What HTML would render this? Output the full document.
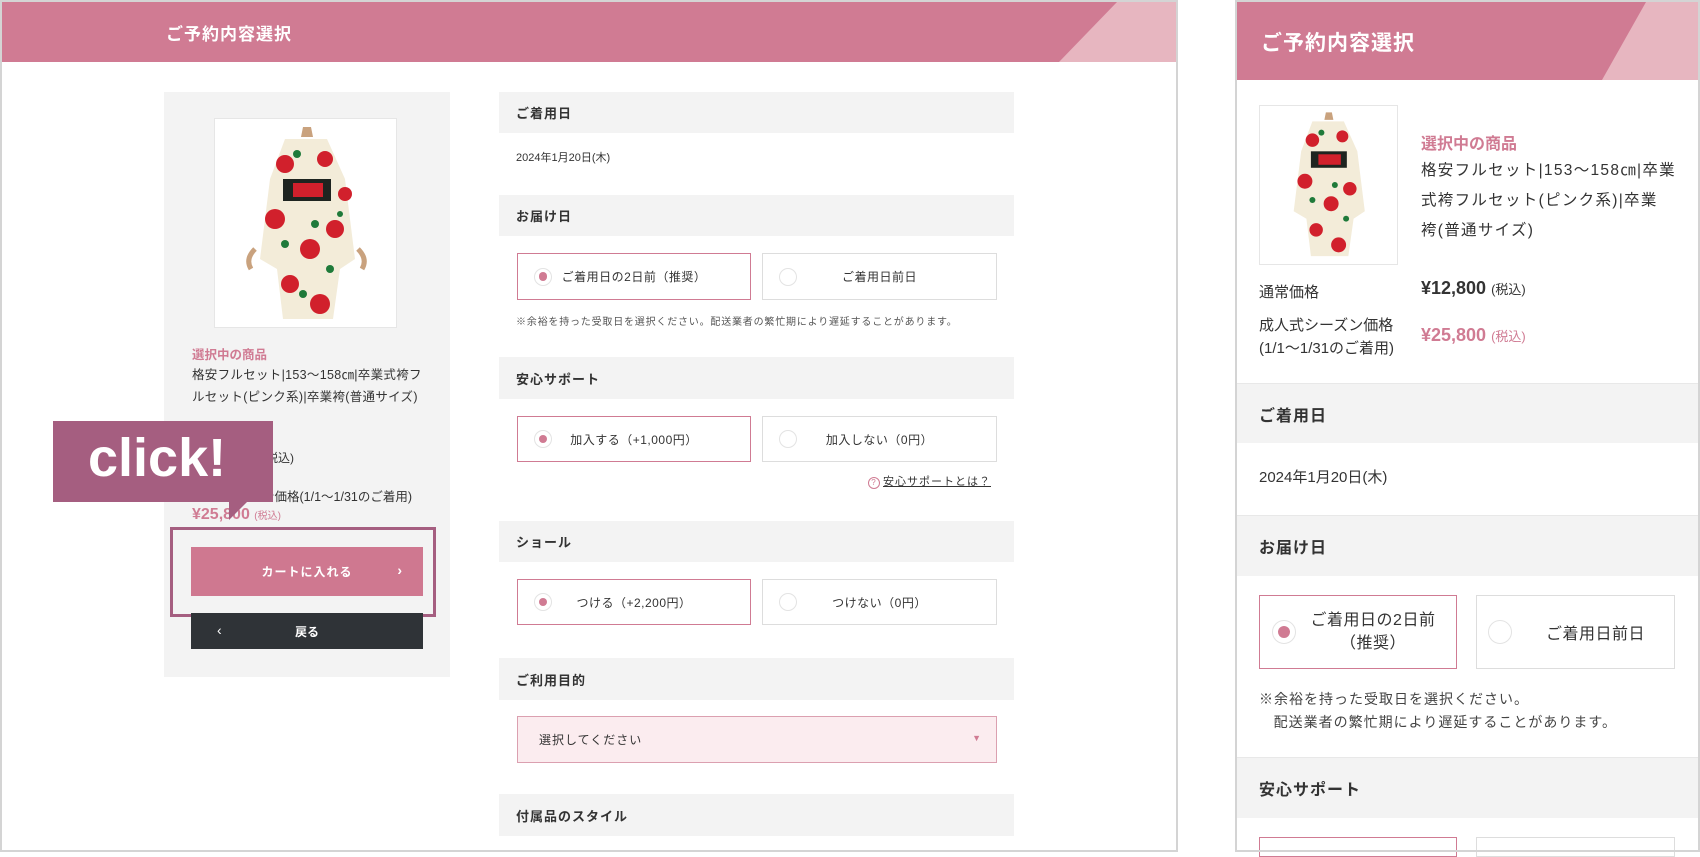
<!DOCTYPE html>
<html><head><meta charset="utf-8"><style>
*{margin:0;padding:0;box-sizing:border-box}
body{width:1700px;height:852px;background:#fff;position:relative;overflow:hidden;font-family:"Liberation Sans","Noto Sans CJK JP",sans-serif;color:#333}
.a{position:absolute}
.frame{border:2px solid #d4d4d4;}
.hd{background:#f3f3f3;font-weight:bold;font-size:13px;color:#333;display:flex;align-items:center;padding-left:17px;letter-spacing:1px}
.opt{border:1px solid #ddd;background:#fff;font-size:12px;display:flex;align-items:center;justify-content:center;letter-spacing:.5px}
.opt.on{border-color:#d07b93}
.rd{position:absolute;left:16px;top:50%;width:18px;height:18px;margin-top:-9px;border-radius:50%;border:1px solid #e3e3e3;background:#fff;display:flex;align-items:center;justify-content:center}
.on .rd::after{content:"";width:56%;height:56%;border-radius:50%;background:#d07b93}
.rhd{background:#f3f3f3;font-weight:bold;font-size:16px;display:flex;align-items:center;padding-left:22px;letter-spacing:1px;border-top:1px solid #e8e8e8}
</style></head><body>

<div class="a frame" style="left:0;top:0;width:1178px;height:852px"></div>
<div class="a" style="left:2px;top:2px;width:1174px;height:60px;background:#d07b93;overflow:hidden">
 <div class="a" style="left:0;top:0;width:1174px;height:60px;background:#e7b6c0;clip-path:polygon(1115px 0,1174px 0,1174px 60px,1057px 60px)"></div>
 <div class="a" style="left:164px;top:18px;color:#fff;font-size:17px;font-weight:bold;letter-spacing:1px">ご予約内容選択</div>
</div>

<div class="a" style="left:164px;top:92px;width:286px;height:585px;background:#f3f3f3"></div>
<div class="a" style="left:214px;top:118px;width:183px;height:210px;background:#fff;border:1px solid #e6e6e6">
 <svg width="183" height="210" viewBox="0 0 183 210">
  <path d="M88 8 L96 8 L98 18 L86 18Z" fill="#c9a27e"/>
  <path d="M70 20 L112 20 L130 60 L140 140 L125 150 L118 200 L68 200 L62 150 L45 140 L55 60Z" fill="#f3ecd9"/>
  <rect x="68" y="60" width="48" height="22" fill="#1e2420"/>
  <rect x="78" y="64" width="30" height="14" fill="#d1202c"/>
  <g fill="#d1202c"><circle cx="70" cy="45" r="9"/><circle cx="110" cy="40" r="8"/><circle cx="60" cy="100" r="10"/><circle cx="120" cy="110" r="9"/><circle cx="95" cy="130" r="10"/><circle cx="75" cy="165" r="9"/><circle cx="105" cy="185" r="10"/><circle cx="130" cy="75" r="7"/></g>
  <g fill="#1f7a3a"><circle cx="82" cy="35" r="4"/><circle cx="100" cy="105" r="4"/><circle cx="70" cy="125" r="4"/><circle cx="115" cy="150" r="4"/><circle cx="88" cy="175" r="4"/><circle cx="125" cy="95" r="3"/></g>
  <path d="M40 130 Q30 140 36 150" stroke="#c9a27e" stroke-width="5" fill="none"/>
  <path d="M143 130 Q153 140 147 150" stroke="#c9a27e" stroke-width="5" fill="none"/>
 </svg>
</div>
<div class="a" style="left:192px;top:344px;color:#d07b93;font-size:12.5px;font-weight:bold">選択中の商品</div>
<div class="a" style="left:192px;top:364px;font-size:12.5px;line-height:22px;color:#333;letter-spacing:.3px;white-space:nowrap">格安フルセット|153〜158㎝|卒業式袴フ<br>ルセット(ピンク系)|卒業袴(普通サイズ)</div>
<div class="a" style="left:262px;top:449px;font-size:12px">(税込)</div>
<div class="a" style="left:262px;top:486px;font-size:12.5px">ン価格(1/1〜1/31のご着用)</div>
<div class="a" style="left:192px;top:506px;color:#d07b93;font-size:16px;font-weight:bold">¥25,800 <span style="font-size:10px;font-weight:normal">(税込)</span></div>

<div class="a" style="left:53px;top:421px;width:220px;height:81px;background:#a55e80"></div>
<div class="a" style="left:229px;top:500px;width:0;height:0;border-left:20px solid #a55e80;border-bottom:20px solid transparent"></div>
<div class="a" style="left:88px;top:422px;color:#fff;font-size:54px;font-weight:bold;line-height:72px">click!</div>

<div class="a" style="left:170px;top:527px;width:266px;height:90px;border:3px solid #a55e80"></div>
<div class="a" style="left:191px;top:547px;width:232px;height:49px;background:#cf7890;color:#fff;font-size:12px;font-weight:bold;display:flex;align-items:center;justify-content:center;letter-spacing:1px">カートに入れる<span class="a" style="right:20px;top:15px;font-size:14px">›</span></div>
<div class="a" style="left:191px;top:613px;width:232px;height:36px;background:#2f3337;color:#fff;font-size:12px;font-weight:bold;display:flex;align-items:center;justify-content:center">戻る<span class="a" style="left:26px;top:9px;font-size:14px;font-weight:normal">‹</span></div>

<div class="a hd" style="left:499px;top:92px;width:515px;height:41px">ご着用日</div>
<div class="a" style="left:516px;top:149px;font-size:11px">2024年1月20日(木)</div>
<div class="a hd" style="left:499px;top:195px;width:515px;height:41px">お届け日</div>
<div class="a opt on" style="left:517px;top:253px;width:234px;height:47px"><span class="rd"></span>ご着用日の2日前（推奨）</div>
<div class="a opt" style="left:762px;top:253px;width:235px;height:47px"><span class="rd"></span>ご着用日前日</div>
<div class="a" style="left:516px;top:313px;font-size:10px;color:#555;letter-spacing:.8px">※余裕を持った受取日を選択ください。配送業者の繁忙期により遅延することがあります。</div>
<div class="a hd" style="left:499px;top:357px;width:515px;height:42px">安心サポート</div>
<div class="a opt on" style="left:517px;top:416px;width:234px;height:46px"><span class="rd"></span>加入する（+1,000円）</div>
<div class="a opt" style="left:762px;top:416px;width:235px;height:46px"><span class="rd"></span>加入しない（0円）</div>
<div class="a" style="left:868px;top:473px;font-size:11px;text-decoration:underline;letter-spacing:1px"><span style="display:inline-block;width:12px;height:12px;border:1px solid #d07b93;border-radius:50%;color:#d07b93;font-size:8px;text-align:center;line-height:10px;text-decoration:none;margin-right:3px">?</span>安心サポートとは？</div>
<div class="a hd" style="left:499px;top:521px;width:515px;height:41px">ショール</div>
<div class="a opt on" style="left:517px;top:579px;width:234px;height:46px"><span class="rd"></span>つける（+2,200円）</div>
<div class="a opt" style="left:762px;top:579px;width:235px;height:46px"><span class="rd"></span>つけない（0円）</div>
<div class="a hd" style="left:499px;top:658px;width:515px;height:42px">ご利用目的</div>
<div class="a" style="left:517px;top:716px;width:480px;height:47px;background:#fbecef;border:1px solid #dba0b0;font-size:12px;display:flex;align-items:center;padding-left:21px;letter-spacing:1px">選択してください<span class="a" style="right:14px;top:16px;color:#d07b93;font-size:9px">▼</span></div>
<div class="a hd" style="left:499px;top:794px;width:515px;height:42px">付属品のスタイル</div>

<div class="a frame" style="left:1235px;top:0;width:465px;height:852px"></div>
<div class="a" style="left:1237px;top:2px;width:461px;height:78px;background:#d07b93;overflow:hidden">
 <div class="a" style="left:0;top:0;width:461px;height:78px;background:#e7b6c0;clip-path:polygon(409px 0,461px 0,461px 78px,365px 78px)"></div>
 <div class="a" style="left:24px;top:25px;color:#fff;font-size:21px;font-weight:bold;letter-spacing:1px">ご予約内容選択</div>
</div>
<div class="a" style="left:1259px;top:105px;width:139px;height:160px;border:1px solid #e6e6e6;background:#fff">
 <svg width="137" height="158" viewBox="0 0 183 210">
  <path d="M88 8 L96 8 L98 18 L86 18Z" fill="#c9a27e"/>
  <path d="M70 20 L112 20 L130 60 L140 140 L125 150 L118 200 L68 200 L62 150 L45 140 L55 60Z" fill="#f3ecd9"/>
  <rect x="68" y="60" width="48" height="22" fill="#1e2420"/>
  <rect x="78" y="64" width="30" height="14" fill="#d1202c"/>
  <g fill="#d1202c"><circle cx="70" cy="45" r="9"/><circle cx="110" cy="40" r="8"/><circle cx="60" cy="100" r="10"/><circle cx="120" cy="110" r="9"/><circle cx="95" cy="130" r="10"/><circle cx="75" cy="165" r="9"/><circle cx="105" cy="185" r="10"/></g>
  <g fill="#1f7a3a"><circle cx="82" cy="35" r="4"/><circle cx="100" cy="105" r="4"/><circle cx="70" cy="125" r="4"/><circle cx="115" cy="150" r="4"/></g>
 </svg>
</div>
<div class="a" style="left:1421px;top:130px;color:#d07b93;font-size:16px;font-weight:bold">選択中の商品</div>
<div class="a" style="left:1421px;top:156px;font-size:15.5px;line-height:30px;letter-spacing:1.3px;white-space:nowrap">格安フルセット|153〜158㎝|卒業<br>式袴フルセット(ピンク系)|卒業<br>袴(普通サイズ)</div>
<div class="a" style="left:1259px;top:281px;font-size:15px">通常価格</div>
<div class="a" style="left:1421px;top:278px;font-size:18px;font-weight:bold">¥12,800 <span style="font-size:13px;font-weight:normal">(税込)</span></div>
<div class="a" style="left:1259px;top:314px;font-size:15px;line-height:23px">成人式シーズン価格<br>(1/1〜1/31のご着用)</div>
<div class="a" style="left:1421px;top:325px;font-size:18px;font-weight:bold;color:#d07b93">¥25,800 <span style="font-size:13px;font-weight:normal">(税込)</span></div>
<div class="a rhd" style="left:1237px;top:383px;width:461px;height:60px">ご着用日</div>
<div class="a" style="left:1259px;top:466px;font-size:15px">2024年1月20日(木)</div>
<div class="a rhd" style="left:1237px;top:515px;width:461px;height:61px">お届け日</div>
<div class="a opt on" style="left:1259px;top:595px;width:198px;height:74px;font-size:16px;text-align:center;line-height:23px;padding-left:30px"><span class="rd" style="left:12px;width:24px;height:24px;margin-top:-12px"></span>ご着用日の2日前<br>（推奨）</div>
<div class="a opt" style="left:1476px;top:595px;width:199px;height:74px;font-size:16px;padding-left:40px"><span class="rd" style="left:11px;width:24px;height:24px;margin-top:-12px"></span>ご着用日前日</div>
<div class="a" style="left:1259px;top:688px;font-size:14px;line-height:23px;color:#444;letter-spacing:1px">※余裕を持った受取日を選択ください。<br>&nbsp;&nbsp;&nbsp;配送業者の繁忙期により遅延することがあります。</div>
<div class="a rhd" style="left:1237px;top:757px;width:461px;height:61px">安心サポート</div>
<div class="a" style="left:1259px;top:837px;width:198px;height:20px;border:1px solid #d07b93"></div>
<div class="a" style="left:1476px;top:837px;width:199px;height:20px;border:1px solid #ddd"></div>
<div class="a" style="left:1235px;top:850px;width:465px;height:2px;background:#d4d4d4"></div>
</body></html>
